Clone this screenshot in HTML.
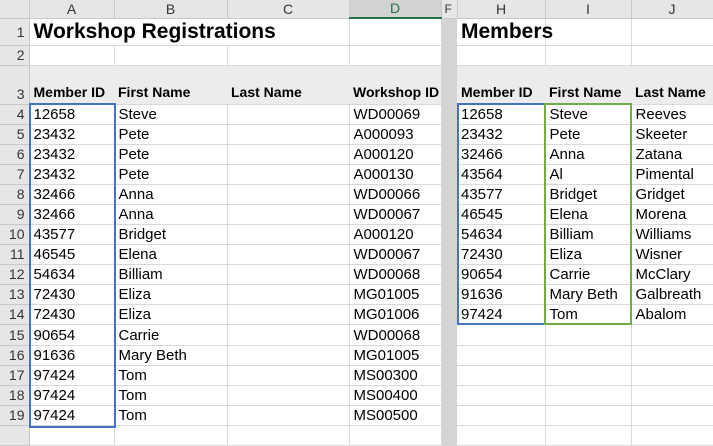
<!DOCTYPE html>
<html><head><meta charset="utf-8"><style>
body{margin:0;width:713px;height:432px;overflow:hidden;background:#fff;font-family:"Liberation Sans",Arial,sans-serif;position:relative}
table{border-collapse:collapse;table-layout:fixed;position:absolute;left:0;top:0;width:713px}
td{border-right:1px solid #d9d9d9;border-bottom:1px solid #d9d9d9;padding:0 0 0 4px;font-size:15px;white-space:nowrap;overflow:hidden;color:#000;height:19px;line-height:19px;vertical-align:bottom}
tr.hd td{background:#e6e6e6;text-align:center;font-size:14px;color:#333;border-right:1px solid #c8c8c8;border-bottom:1px solid #c8c8c8;height:17px;line-height:17px;padding:0}
td.rn{background:#e6e6e6;text-align:right;padding:0 4px 0 0;font-size:14px;color:#333;border-bottom:1px solid #c8c8c8;border-right:1px solid #c8c8c8}
td.gap{background:#d4d4d4;border:none;padding:0}
tr.r3 td:not(.rn):not(.gap){background:#ececec;border-right:none;font-weight:bold;font-size:14px;padding-bottom:2px}
tr.r1 td{height:26px;line-height:26px}
tr.r3 td{height:36px;line-height:20px}
.t{font-size:21px;font-weight:bold;overflow:visible}
.box{position:absolute;box-sizing:border-box;border:2px solid #4472c4}
</style></head><body>
<table>
<colgroup><col style="width:29px"><col style="width:85px"><col style="width:113px"><col style="width:122px"><col style="width:92px"><col style="width:16px"><col style="width:88px"><col style="width:86px"><col style="width:82px"></colgroup>
<tr class="hd"><td style="background:#e6e6e6"></td><td>A</td><td>B</td><td>C</td><td style="background:#d2d2d2;color:#217346;border-bottom:2px solid #217346">D</td><td style="font-size:12px;text-align:left;padding-left:3px">F</td><td>H</td><td>I</td><td>J</td></tr>
<tr class="r1"><td class="rn">1</td><td class="t" colspan="3" style="border-right:1px solid #d9d9d9">Workshop Registrations</td><td></td><td class="gap"></td><td class="t">Members</td><td></td><td></td></tr>
<tr><td class="rn">2</td><td></td><td></td><td></td><td></td><td class="gap"></td><td></td><td></td><td></td></tr>
<tr class="r3"><td class="rn">3</td><td>Member ID</td><td>First Name</td><td>Last Name</td><td>Workshop ID</td><td class="gap"></td><td>Member ID</td><td>First Name</td><td>Last Name</td></tr>
<tr><td class="rn">4</td><td>12658</td><td>Steve</td><td></td><td>WD00069</td><td class="gap"></td><td>12658</td><td>Steve</td><td>Reeves</td></tr>
<tr><td class="rn">5</td><td>23432</td><td>Pete</td><td></td><td>A000093</td><td class="gap"></td><td>23432</td><td>Pete</td><td>Skeeter</td></tr>
<tr><td class="rn">6</td><td>23432</td><td>Pete</td><td></td><td>A000120</td><td class="gap"></td><td>32466</td><td>Anna</td><td>Zatana</td></tr>
<tr><td class="rn">7</td><td>23432</td><td>Pete</td><td></td><td>A000130</td><td class="gap"></td><td>43564</td><td>Al</td><td>Pimental</td></tr>
<tr><td class="rn">8</td><td>32466</td><td>Anna</td><td></td><td>WD00066</td><td class="gap"></td><td>43577</td><td>Bridget</td><td>Gridget</td></tr>
<tr><td class="rn">9</td><td>32466</td><td>Anna</td><td></td><td>WD00067</td><td class="gap"></td><td>46545</td><td>Elena</td><td>Morena</td></tr>
<tr><td class="rn">10</td><td>43577</td><td>Bridget</td><td></td><td>A000120</td><td class="gap"></td><td>54634</td><td>Billiam</td><td>Williams</td></tr>
<tr><td class="rn">11</td><td>46545</td><td>Elena</td><td></td><td>WD00067</td><td class="gap"></td><td>72430</td><td>Eliza</td><td>Wisner</td></tr>
<tr><td class="rn">12</td><td>54634</td><td>Billiam</td><td></td><td>WD00068</td><td class="gap"></td><td>90654</td><td>Carrie</td><td>McClary</td></tr>
<tr><td class="rn">13</td><td>72430</td><td>Eliza</td><td></td><td>MG01005</td><td class="gap"></td><td>91636</td><td>Mary Beth</td><td>Galbreath</td></tr>
<tr><td class="rn">14</td><td>72430</td><td>Eliza</td><td></td><td>MG01006</td><td class="gap"></td><td>97424</td><td>Tom</td><td>Abalom</td></tr>
<tr><td class="rn" style="height:20px">15</td><td>90654</td><td>Carrie</td><td></td><td>WD00068</td><td class="gap"></td><td></td><td></td><td></td></tr>
<tr><td class="rn">16</td><td>91636</td><td>Mary Beth</td><td></td><td>MG01005</td><td class="gap"></td><td></td><td></td><td></td></tr>
<tr><td class="rn">17</td><td>97424</td><td>Tom</td><td></td><td>MS00300</td><td class="gap"></td><td></td><td></td><td></td></tr>
<tr><td class="rn">18</td><td>97424</td><td>Tom</td><td></td><td>MS00400</td><td class="gap"></td><td></td><td></td><td></td></tr>
<tr><td class="rn">19</td><td>97424</td><td>Tom</td><td></td><td>MS00500</td><td class="gap"></td><td></td><td></td><td></td></tr>
<tr><td class="rn"></td><td></td><td></td><td></td><td></td><td class="gap"></td><td></td><td></td><td></td></tr>
</table>
<div class="box" style="left:29px;top:103px;width:87px;height:325px"></div>
<div class="box" style="left:457px;top:103px;width:89px;height:222px"></div>
<div class="box" style="left:544px;top:103px;width:88px;height:222px;border-color:#70ad47"></div>
</body></html>
